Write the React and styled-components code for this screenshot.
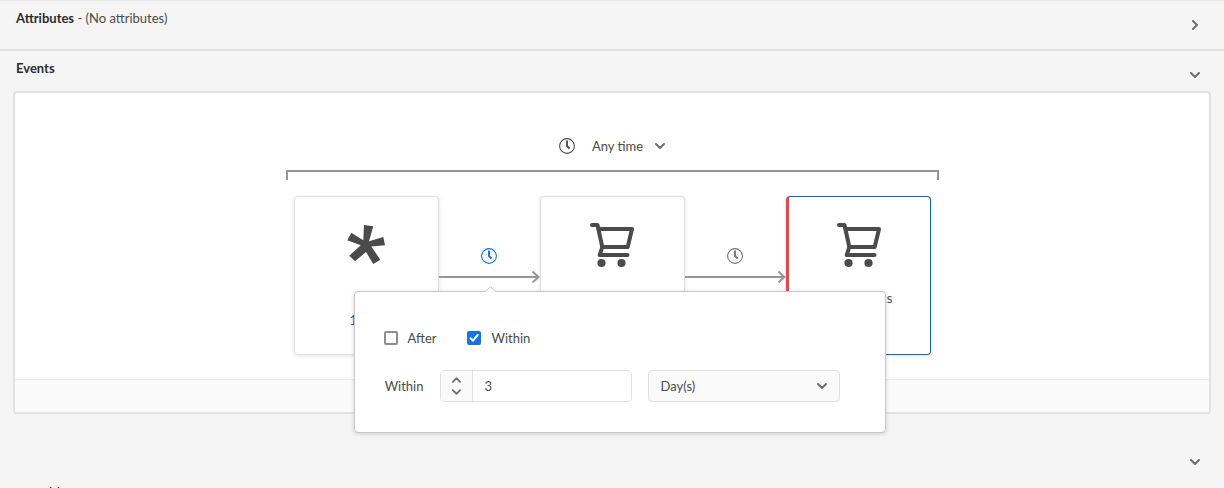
import React, { useState } from "react";
import styled, { createGlobalStyle } from "styled-components";

const GlobalStyle = createGlobalStyle`
  *, *::before, *::after { box-sizing: border-box; }
  body {
    margin: 0;
    background: #f5f5f5;
    color: #4b4b4b;
    font-family: Lato, "Noto Sans", sans-serif;
    font-size: 13px;
    line-height: 20px;
  }
  button, input, select { font: inherit; color: inherit; margin: 0; }
`;

const Page = styled.main`
  height: 100vh;
  overflow: hidden;
  border-top: 1px solid #e8e8e8;
`;

const Section = styled.section`
  border-bottom: ${(p) => (p.$divided ? "2px solid #e1e1e1" : "0")};
`;

const SectionHeader = styled.header`
  display: flex;
  justify-content: space-between;
  align-items: flex-start;
  height: ${(p) => (p.$compact ? 40 : 48)}px;
  padding: 7px 21px 0 16px;
`;

const Title = styled.h2`
  margin: 0;
  font-size: 13px;
  font-weight: 400;
  line-height: 20px;

  strong { color: #2c2c2c; font-weight: 700; }
`;

const IconButton = styled.button`
  display: flex;
  align-items: center;
  justify-content: center;
  width: 16px;
  height: 16px;
  margin-top: 9px;
  padding: 0;
  border: 0;
  background: none;
`;

const Panel = styled.div`
  margin: 0 13px;
  border: 2px solid #e1e1e1;
  border-radius: 4px;
  background: #fff;
`;

const Canvas = styled.div`
  display: flex;
  flex-direction: column;
  align-items: center;
  padding: 43px 0 24px;
`;

const PanelFooter = styled.div`
  height: 33px;
  border-top: 1px solid #eaeaea;
  background: #fafafa;
`;

const TimeButton = styled.button`
  display: flex;
  align-items: center;
  height: 20px;
  padding: 0;
  border: 0;
  background: none;

  span { margin: 0 12px 0 17px; }
`;

const Sequence = styled.div`
  margin-top: 14px;
`;

const Bracket = styled.div`
  height: 10px;
  border: 2px solid #969696;
  border-bottom: 0;
`;

const Steps = styled.div`
  display: flex;
  padding: 16px 8px 0;
`;

const Card = styled.article`
  display: flex;
  flex-direction: column;
  align-items: center;
  width: 145px;
  height: 159px;
  padding-top: 25px;
  border: 1px solid ${(p) => (p.$selected ? "#0d66d0" : "#e1e1e1")};
  border-left: ${(p) => (p.$selected ? "3px solid #e34850" : "1px solid #e1e1e1")};
  border-radius: 4px;
  background: #fff;
  box-shadow: 0 1px 4px rgba(0, 0, 0, 0.12);
`;

const Picture = styled.div`
  display: flex;
  align-items: center;
  height: 46px;
`;

const CardLabel = styled.div`
  margin-top: 20px;
  line-height: 20px;
`;

const CardLink = styled.a`
  color: #0d66d0;
  text-decoration: none;
  line-height: 24px;
`;

const Connector = styled.div`
  position: relative;
  display: flex;
  flex-direction: column;
  align-items: center;
  width: 101px;
  padding-top: 52px;
`;

const ClockButton = styled.button`
  display: flex;
  padding: 0;
  border: 0;
  background: none;
  color: ${(p) => (p.$active ? "#1473e6" : "#747474")};
`;

const Arrow = styled.svg`
  display: block;
  width: 101px;
  height: 14px;
  margin-top: 6px;
`;

const Popover = styled.form`
  position: absolute;
  z-index: 2;
  top: 95px;
  left: -85px;
  width: 532px;
  height: 142px;
  padding: 36px 45px 0 29px;
  border: 1px solid #c6c6c6;
  border-radius: 4px;
  background: #fff;
  box-shadow: 0 1px 4px rgba(0, 0, 0, 0.16);
`;

const Tip = styled.svg`
  position: absolute;
  top: -6px;
  left: 129px;
`;

const CheckRow = styled.div`
  display: flex;
  gap: 31px;
`;

const CheckLabel = styled.label`
  position: relative;
  display: flex;
  align-items: center;
  gap: 10px;
  height: 20px;

  svg {
    position: absolute;
    left: 0;
    top: 3px;
    pointer-events: none;
  }
`;

const CheckInput = styled.input`
  appearance: none;
  width: 14px;
  height: 14px;
  border: 2px solid #8e8e8e;
  border-radius: 2px;
  background: #fff;

  &:checked { border-color: #1473e6; background: #1473e6; }
`;

const FieldRow = styled.div`
  display: flex;
  align-items: center;
  gap: 16px;
  margin-top: 22px;
`;

const FieldLabel = styled.label`
  flex: 1;
  text-align: right;
`;

const NumberField = styled.div`
  display: flex;
  flex: none;
  width: 192px;
  height: 32px;
  border: 1px solid #e1e1e1;
  border-radius: 4px;
  overflow: hidden;
`;

const Stepper = styled.div`
  display: flex;
  flex-direction: column;
  justify-content: center;
  gap: 4px;
  width: 32px;
  border-right: 1px solid #e1e1e1;
  background: #fafafa;
`;

const StepButton = styled.button`
  display: flex;
  align-items: center;
  justify-content: center;
  height: 8px;
  padding: 0;
  border: 0;
  background: none;
`;

const NumberInput = styled.input`
  flex: 1;
  min-width: 0;
  padding: 0 12px;
  border: 0;
  outline: 0;
`;

const SelectField = styled.div`
  position: relative;
  flex: none;
  width: 192px;

  svg {
    position: absolute;
    top: 13px;
    right: 13px;
    pointer-events: none;
  }
`;

const Select = styled.select`
  appearance: none;
  display: block;
  width: 100%;
  height: 32px;
  padding: 0 12px;
  border: 1px solid #e1e1e1;
  border-radius: 4px;
  background: #fafafa;
`;

const LowerSection = styled.section`
  display: flex;
  flex-direction: column;
  padding: 31px 21px 0 16px;

  ${IconButton} { align-self: flex-end; }
`;

const RowTitle = styled.h3`
  margin: 12px 0 0;
  color: #2c2c2c;
  font-size: 14px;
  font-weight: 400;
  line-height: 20px;
`;

const ROTATION = { down: 0, up: 180, right: -90 };

function Chevron({ direction = "down", small = false }) {
  const sideways = direction === "right";
  const box = sideways ? "0 0 10 10" : "0 2 10 6";
  const size = sideways ? [10, 10] : small ? [9, 6] : [10, 6];
  return (
    <svg width={size[0]} height={size[1]} viewBox={box} aria-hidden="true">
      <path
        d="M1 3l4 4 4-4"
        transform={`rotate(${ROTATION[direction]} 5 5)`}
        fill="none"
        stroke="#6e6e6e"
        strokeWidth="2"
        strokeLinecap="round"
        strokeLinejoin="round"
      />
    </svg>
  );
}

function Clock() {
  return (
    <svg width="16" height="16" viewBox="0 0 16 16" fill="none" stroke="currentColor" aria-hidden="true">
      <circle cx="8" cy="8" r="7.4" strokeWidth="1.1" />
      <path d="M8 2.5V8l2.6 2.6" strokeWidth="1.9" />
    </svg>
  );
}

function Asterisk() {
  return (
    <svg width="38" height="40" viewBox="0 0 38 40" fill="#4b4b4b" aria-hidden="true">
      <path d="M17 0L26.3 1.3 22 16.3 36.3 12 38 20.3 24.3 21.5 33.3 34.7 26.3 39 19 27 8 36.3 2.3 30.7 13.7 20.3.3 15.2 4.3 7.7 16.3 15.3Z" />
    </svg>
  );
}

function Cart() {
  return (
    <svg width="45" height="46" viewBox="0 0 45 46" fill="none" stroke="#4b4b4b" strokeWidth="4" strokeLinecap="round" strokeLinejoin="round" aria-hidden="true">
      <path d="M2 3H7.5L12.3 25 9.7 33H37.5" />
      <path d="M8.5 7H42L37.7 25H12.3" />
      <circle cx="11.5" cy="41" r="4.1" fill="#4b4b4b" stroke="none" />
      <circle cx="31.5" cy="41" r="4.1" fill="#4b4b4b" stroke="none" />
    </svg>
  );
}

function StepArrow() {
  return (
    <Arrow viewBox="0 0 101 14" fill="none" stroke="#969696" strokeWidth="2" aria-hidden="true">
      <path d="M0 7H99M93.500 1.500L99.500 7 93.500 12.500" />
    </Arrow>
  );
}

function TimePopover() {
  const [after, setAfter] = useState(false);
  const [within, setWithin] = useState(true);
  const [amount, setAmount] = useState(3);
  return (
    <Popover onSubmit={(e) => e.preventDefault()}>
      <Tip width="14" height="7" viewBox="0 0 14 7" aria-hidden="true">
        <path d="M1 6L6.500 .7 12 6V7H1Z" fill="#fff" />
        <path d="M1 5.700L6.500 .7 12 5.700" fill="none" stroke="#c6c6c6" />
      </Tip>
      <CheckRow>
        <CheckLabel>
          <CheckInput type="checkbox" checked={after} onChange={(e) => setAfter(e.target.checked)} />
          After
        </CheckLabel>
        <CheckLabel>
          <CheckInput type="checkbox" checked={within} onChange={(e) => setWithin(e.target.checked)} />
          {within && (
            <svg width="14" height="14" viewBox="0 0 14 14" aria-hidden="true">
              <path d="M3.500 7.200L6 9.700 10.700 4" fill="none" stroke="#fff" strokeWidth="2" strokeLinecap="round" strokeLinejoin="round" />
            </svg>
          )}
          Within
        </CheckLabel>
      </CheckRow>
      <FieldRow>
        <FieldLabel htmlFor="amount">Within</FieldLabel>
        <NumberField>
          <Stepper>
            <StepButton type="button" aria-label="Increase" onClick={() => setAmount(Number(amount) + 1)}>
              <Chevron direction="up" small />
            </StepButton>
            <StepButton type="button" aria-label="Decrease" onClick={() => setAmount(Number(amount) - 1)}>
              <Chevron small />
            </StepButton>
          </Stepper>
          <NumberInput id="amount" inputMode="numeric" value={amount} onChange={(e) => setAmount(e.target.value)} />
        </NumberField>
        <SelectField>
          <Select aria-label="Unit" defaultValue="days">
            <option value="days">Day(s)</option>
          </Select>
          <Chevron />
        </SelectField>
      </FieldRow>
    </Popover>
  );
}

export default function App() {
  return (
    <>
      <GlobalStyle />
      <Page>
        <Section $divided>
          <SectionHeader>
            <Title><strong>Attributes</strong> - (No attributes)</Title>
            <IconButton aria-label="Expand attributes"><Chevron direction="right" /></IconButton>
          </SectionHeader>
        </Section>
        <Section>
          <SectionHeader $compact>
            <Title><strong>Events</strong></Title>
            <IconButton aria-label="Collapse events"><Chevron /></IconButton>
          </SectionHeader>
          <Panel>
            <Canvas>
              <TimeButton>
                <Clock />
                <span>Any time</span>
                <Chevron />
              </TimeButton>
              <Sequence>
                <Bracket />
                <Steps>
                  <Card>
                    <Picture><Asterisk /></Picture>
                    <CardLabel>Any</CardLabel>
                    <CardLink href="#rule">1 rule</CardLink>
                  </Card>
                  <Connector>
                    <ClockButton $active aria-label="Time between first and second event"><Clock /></ClockButton>
                    <StepArrow />
                    <TimePopover />
                  </Connector>
                  <Card>
                    <Picture><Cart /></Picture>
                  </Card>
                  <Connector>
                    <ClockButton aria-label="Time between second and third event"><Clock /></ClockButton>
                    <StepArrow />
                  </Connector>
                  <Card $selected>
                    <Picture><Cart /></Picture>
                    <CardLabel>Cart checks</CardLabel>
                  </Card>
                </Steps>
              </Sequence>
            </Canvas>
            <PanelFooter />
          </Panel>
        </Section>
        <LowerSection>
          <IconButton aria-label="Collapse section"><Chevron /></IconButton>
          <RowTitle>reusable</RowTitle>
        </LowerSection>
      </Page>
    </>
  );
}
